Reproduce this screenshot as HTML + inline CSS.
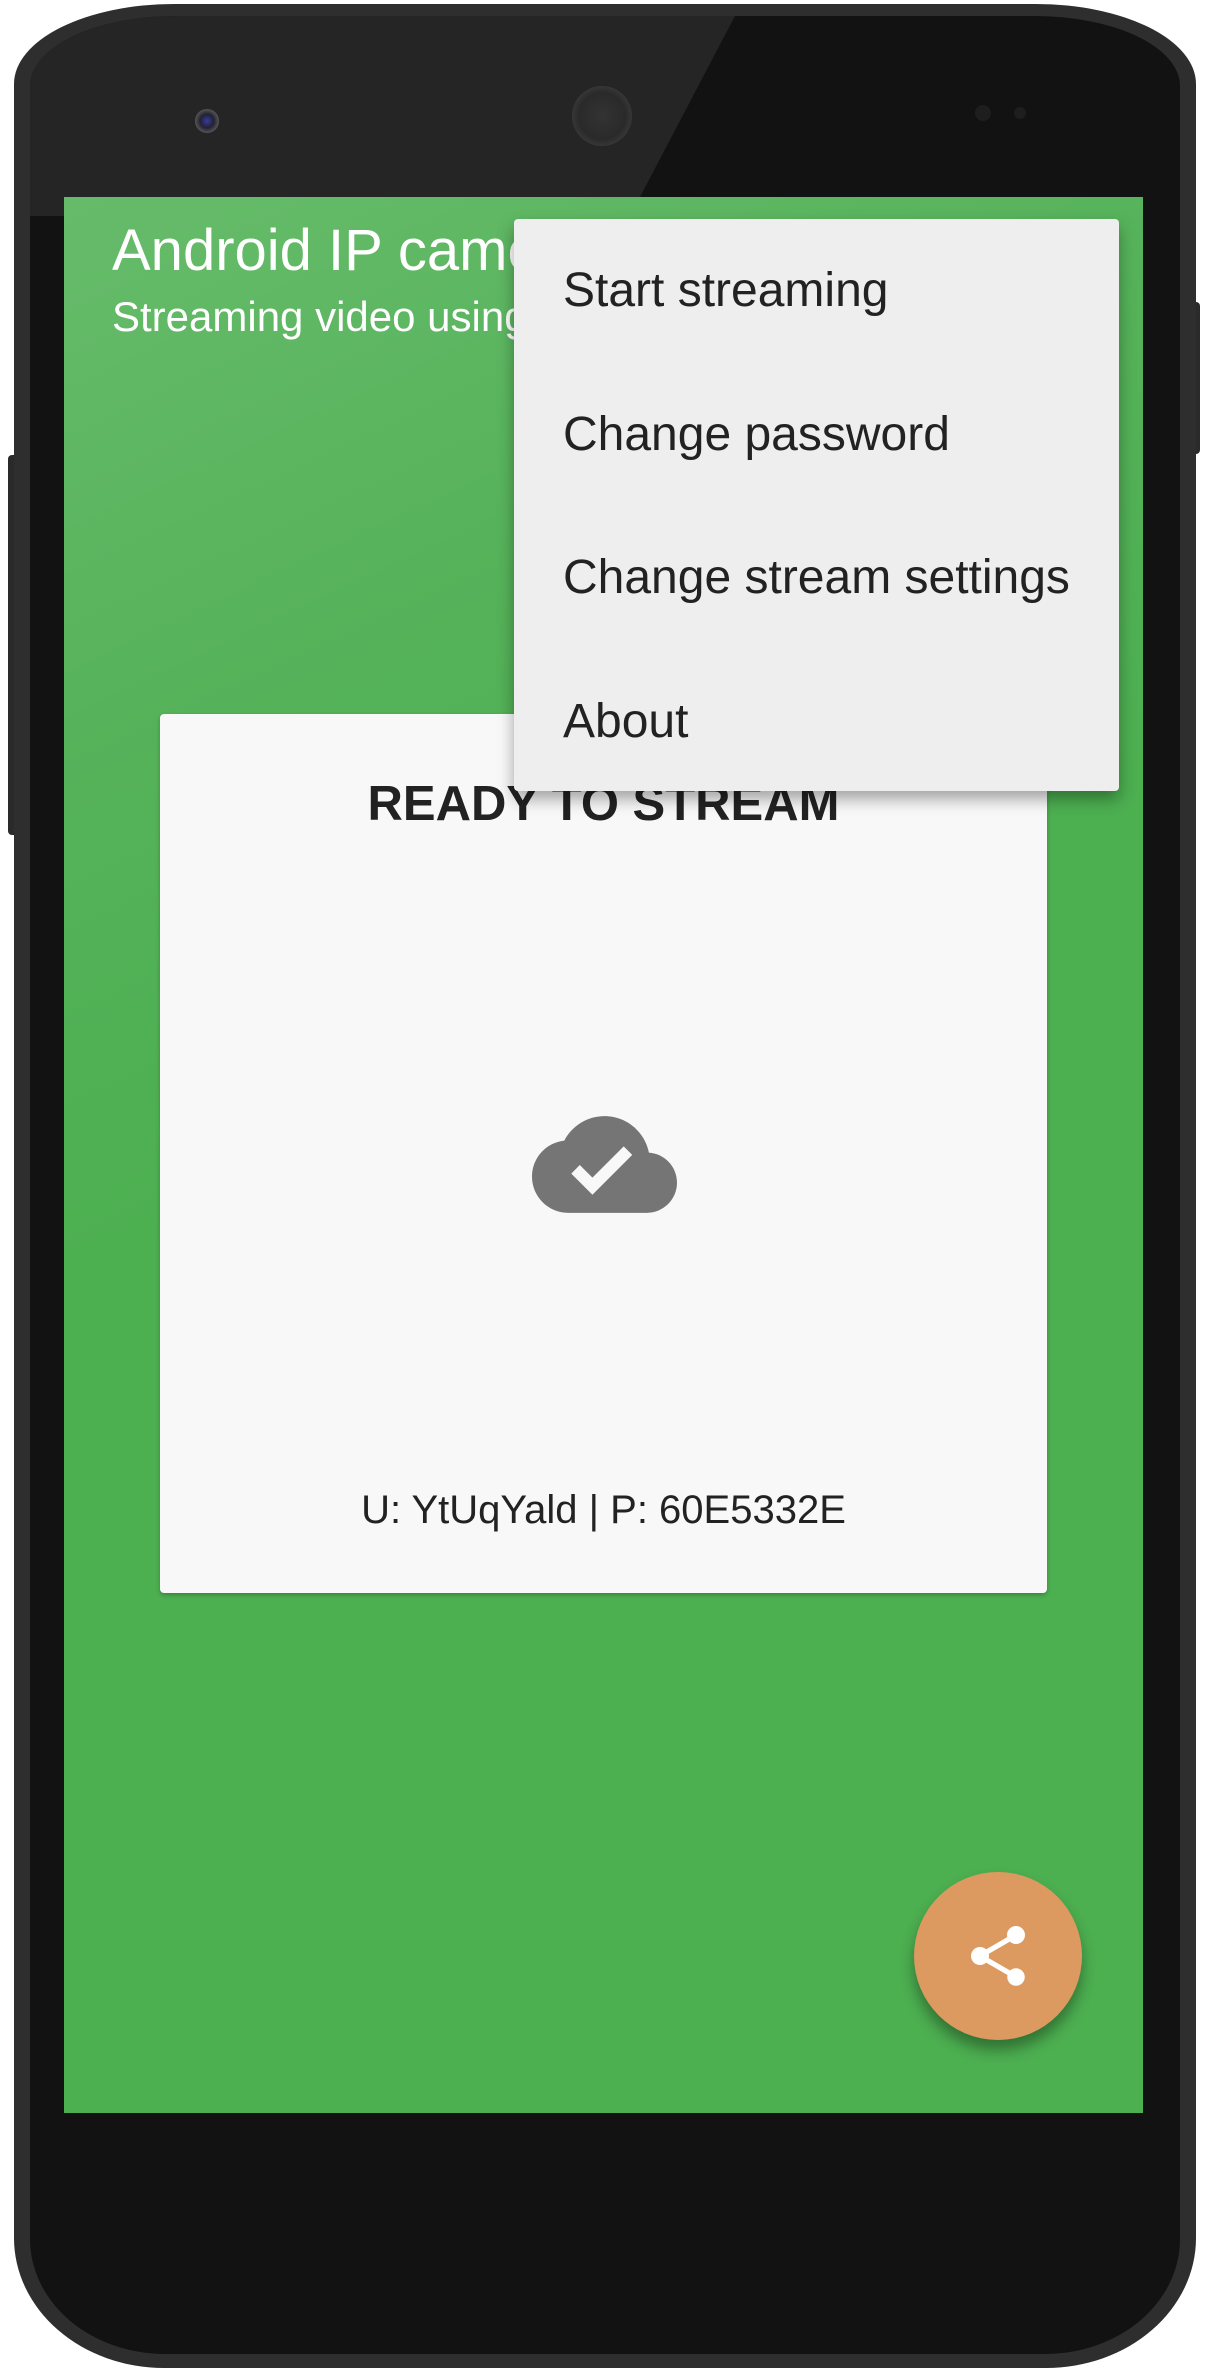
<!DOCTYPE html>
<html><head><meta charset="utf-8"><style>
html,body{margin:0;padding:0;background:#fff;}
body{width:1210px;height:2375px;position:relative;overflow:hidden;font-family:"Liberation Sans",sans-serif;}
.phone{position:absolute;left:14px;top:4px;width:1182px;height:2364px;border-radius:160px 160px 150px 150px / 80px 80px 130px 130px;background:#2e2e2e;}
.phone-in{position:absolute;left:16px;top:12px;right:16px;bottom:14px;border-radius:145px 145px 135px 135px/70px 70px 115px 115px;background:#121212;overflow:hidden;}
.btn{position:absolute;background:#2a2a2a;}
.screen{position:absolute;left:64px;top:197px;width:1079px;height:1916px;background:linear-gradient(155deg,#66bb6a 0%,#55b259 25%,#4caf50 45%,#4caf50 100%);overflow:hidden;}
.title{position:absolute;left:48px;top:20px;color:#fff;font-size:58px;white-space:nowrap;}
.sub{position:absolute;left:48px;top:96px;color:#fff;font-size:42px;white-space:nowrap;}
.card{position:absolute;left:96px;top:517px;width:887px;height:879px;background:#f8f8f8;border-radius:4px;box-shadow:0 2px 4px rgba(0,0,0,.25);}
.ready{position:absolute;left:0;right:0;top:62px;text-align:center;font-weight:bold;font-size:49px;color:#222;}
.creds{position:absolute;left:0;right:0;top:774px;text-align:center;font-size:40px;color:#222;}
.menu{position:absolute;left:450px;top:22px;width:605px;height:572px;background:#eeeeee;border-radius:4px;box-shadow:0 8px 16px rgba(0,0,0,.35);}
.mi{position:absolute;left:49px;font-size:48px;color:#222;white-space:nowrap;}
.fab{position:absolute;left:850px;top:1675px;width:168px;height:168px;border-radius:50%;background:#dc9a60;box-shadow:0 10px 14px rgba(0,0,0,.35);}
</style></head><body>
<div class="btn" style="left:1190px;top:302px;width:10px;height:152px;border-radius:0 4px 4px 0"></div>
<div class="btn" style="left:8px;top:455px;width:10px;height:380px;border-radius:4px 0 0 4px"></div>
<div class="phone"><div class="phone-in">
<svg style="position:absolute;left:0;top:0" width="1150" height="2340"><polygon points="0,0 705,0 600,200 0,200" fill="#252525"/></svg>
</div></div>
<div style="position:absolute;left:195px;top:109px;width:24px;height:24px;border-radius:50%;background:radial-gradient(circle at 50% 50%,#3a3aa0 0,#223 40%,#555 70%,#333 100%)"></div>
<div style="position:absolute;left:572px;top:86px;width:60px;height:60px;border-radius:50%;background:radial-gradient(circle,#333 0,#2a2a2a 55%,#3a3a3a 75%,#444 100%)"></div>
<div style="position:absolute;left:975px;top:105px;width:16px;height:16px;border-radius:50%;background:#1e1e1e"></div>
<div style="position:absolute;left:1014px;top:107px;width:12px;height:12px;border-radius:50%;background:#1e1e1e"></div>
<div class="screen">
  <div class="title">Android IP camera</div>
  <div class="sub">Streaming video using your phone</div>
  <div class="card">
    <div class="ready">READY TO STREAM</div>
    <svg style="position:absolute;left:372px;top:378px" width="145" height="145" viewBox="0 0 24 24"><path fill="#757575" d="M19.35 10.04C18.67 6.59 15.64 4 12 4 9.11 4 6.6 5.64 5.35 8.04 2.34 8.36 0 10.91 0 14c0 3.31 2.69 6 6 6h13c2.76 0 5-2.24 5-5 0-2.64-2.05-4.78-4.65-4.96zM10 17l-3.5-3.5 1.41-1.41L10 14.17 15.18 9l1.41 1.41L10 17z"/></svg>
    <div class="creds">U: YtUqYald | P: 60E5332E</div>
  </div>
  <div class="menu">
    <div class="mi" style="top:44px">Start streaming</div>
    <div class="mi" style="top:188px">Change password</div>
    <div class="mi" style="top:331px">Change stream settings</div>
    <div class="mi" style="top:475px">About</div>
  </div>
  <div class="fab">
    <svg style="position:absolute;left:48px;top:48px" width="72" height="72" viewBox="0 0 24 24"><path fill="#fff" d="M18 16.08c-.76 0-1.44.3-1.96.77L8.91 12.7c.05-.23.09-.46.09-.7s-.04-.47-.09-.7l7.05-4.11c.54.5 1.25.81 2.04.81 1.66 0 3-1.34 3-3s-1.34-3-3-3-3 1.34-3 3c0 .24.04.47.09.7L8.04 9.81C7.5 9.31 6.79 9 6 9c-1.66 0-3 1.340-3 3s1.34 3 3 3c.79 0 1.5-.31 2.04-.81l7.12 4.16c-.05.21-.08.43-.08.65 0 1.61 1.31 2.92 2.92 2.92s2.92-1.31 2.92-2.92-1.31-2.92-2.92-2.92z"/></svg>
  </div>
</div>
</body></html>
